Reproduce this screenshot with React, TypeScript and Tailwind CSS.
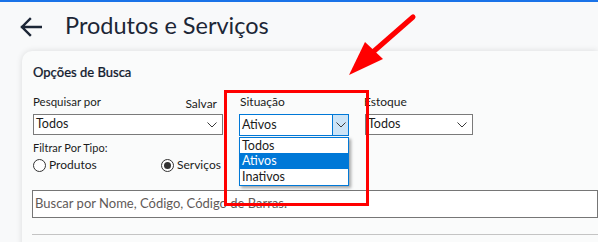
import React from "react";

const Chevron = () => (
  <svg width="10" height="6" viewBox="0 0 10 6" fill="none">
    <polyline points="0.5,0.5 5,5 9.5,0.5" stroke="#3a3a3a" strokeWidth="1" />
  </svg>
);

function FakeSelect({ value, width }: { value: string; width: string }) {
  return (
    <div
      className={`${width} h-[21px] border border-[#7a7a7a] bg-white flex items-center justify-between pl-[2px] pr-[5px] text-[12.5px] text-[#1b1b1b]`}
    >
      <span>{value}</span>
      <Chevron />
    </div>
  );
}

export default function App() {
  return (
    <div
      className="relative w-[598px] h-[242px] overflow-hidden bg-[#f8f9fa] border-t-2 border-[#1a73e8]"
      style={{ fontFamily: "Lato, 'Noto Sans', sans-serif" }}
    >
      {/* Header */}
      <div className="flex items-center h-[48px] pl-[20px]">
        <svg width="22" height="20" viewBox="0 0 22 20" fill="none" className="mt-[1px]">
          <path d="M21 10H2M10 2L2 10L10 18" stroke="#1c2636" strokeWidth="2.4" strokeLinecap="square" />
        </svg>
        <h1 className="ml-[23px] text-[23.5px] leading-none text-[#1c2636]">
          Produtos e Serviços
        </h1>
      </div>

      {/* Card */}
      <div className="ml-[22px] mt-[1px] h-[260px] rounded-tl-[10px] bg-[#fafbfb] shadow-[0_0_6px_rgba(0,0,0,0.12)] pl-[11px] pt-[13px]">
        <div className="text-[13px] leading-[16px] font-medium text-[#13202f] [-webkit-text-stroke:0.2px_#13202f]">Opções de Busca</div>

        <div className="flex mt-[14px] gap-[16px]">
          <div className="w-[190px]">
            <div className="flex justify-between h-[20px] text-[#1b1b1b]">
              <span className="text-[11.5px] leading-[16px]">Pesquisar por</span>
              <span className="text-[12px] leading-[16px] mt-[2px] mr-[6px]">Salvar</span>
            </div>
            <FakeSelect value="Todos" width="w-[190px]" />
          </div>
          <div className="w-[110px]">
            <div className="h-[20px] text-[12px] leading-[16px] text-[#1b1b1b] pl-[1px]">Situação</div>
            <div className="w-[110px] h-[22px] border border-[#0078d7] bg-white flex items-stretch text-[12.5px] text-[#1b1b1b]">
              <span className="flex-1 pl-[2px] flex items-center">Ativos</span>
              <span className="w-[16px] bg-[#cce4f7] border-l border-[#0078d7] flex items-center justify-center">
                <Chevron />
              </span>
            </div>
          </div>
          <div className="w-[108px]">
            <div className="h-[20px] text-[12px] leading-[16px] text-[#1b1b1b] -ml-[1px]">Estoque</div>
            <FakeSelect value="Todos" width="w-[108px]" />
          </div>
        </div>

        <div className="mt-[4px] text-[11px] leading-[16px] text-[#1b1b1b]">Filtrar Por Tipo:</div>
        <div className="flex items-center mt-[1px] h-[16px] text-[12px] text-[#1b1b1b]">
          <div className="flex items-center w-[128px]">
            <span className="w-[13px] h-[13px] rounded-full border border-[#333] bg-white"></span>
            <span className="ml-[3px]">Produtos</span>
          </div>
          <div className="flex items-center">
            <span className="w-[13px] h-[13px] rounded-full border border-[#333] bg-white flex items-center justify-center">
              <span className="w-[7px] h-[7px] rounded-full bg-[#333]"></span>
            </span>
            <span className="ml-[3px]">Serviços</span>
          </div>
        </div>

        <div className="mt-[17px] h-[28px] border border-[#767676] bg-white flex items-center pl-[2px] text-[13px] text-[#5f5a58] -ml-[1px]">
          Buscar por Nome, Código, Código de Barras.
        </div>

        <div className="mt-[16px] h-px bg-[#c4c4c4] -ml-[1px]"></div>
      </div>

      {/* Dropdown list overlay */}
      <div className="absolute left-[239px] top-[135px] w-[110px] border border-[#0078d7] bg-white shadow-[2px_2px_3px_rgba(0,0,0,0.35)] text-[12.5px] leading-[16px]">
        <div className="pl-[2px] h-[15px] text-[#1b1b1b] flex items-center">Todos</div>
        <div className="pl-[2px] h-[16px] bg-[#0078d7] text-white flex items-center">Ativos</div>
        <div className="pl-[2px] h-[16px] text-[#1b1b1b] flex items-center">Inativos</div>
      </div>

      {/* Red annotation box */}
      <div className="absolute left-[224px] top-[88px] w-[145px] h-[116px] border-[3px] border-[#ff0000]"></div>

      {/* Red arrow */}
      <svg className="absolute left-0 top-0" width="598" height="242" viewBox="0 0 598 242">
        <line x1="413" y1="15" x2="373" y2="50" stroke="#ff0000" strokeWidth="5" strokeLinecap="round" />
        <polygon points="349,73 365,40 383,57" fill="#ff0000" />
      </svg>
    </div>
  );
}
